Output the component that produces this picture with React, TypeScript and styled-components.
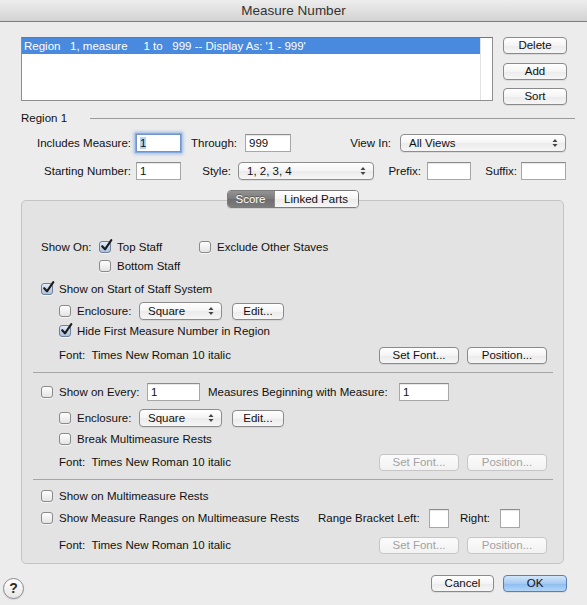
import styled, { createGlobalStyle, css } from 'styled-components';

const FONT = `'Lucida Grande', 'Liberation Sans', Arial, sans-serif`;

const GlobalStyle = createGlobalStyle`
  html, body {
    margin: 0;
    padding: 0;
  }
  body {
    background: #ececec;
    font-family: ${FONT};
  }
`;

const Window = styled.div`
  width: 587px;
  height: 605px;
  background: #ececec;
  display: flex;
  flex-direction: column;
  font-family: ${FONT};
  font-size: 11.5px;
  color: #111;
  overflow: hidden;
`;

const TitleBar = styled.div`
  height: 21px;
  flex-shrink: 0;
  border-bottom: 1px solid #7e7e7e;
  background: linear-gradient(#ededed, #d3d3d3);
  display: flex;
  align-items: center;
  justify-content: center;
  font-size: 13.5px;
  color: #333;
`;

/* ---------- top list ---------- */

const TopArea = styled.div`
  display: flex;
  margin-top: 15px;
  padding-left: 21px;
`;

const ListBox = styled.div`
  width: 472px;
  height: 64px;
  box-sizing: border-box;
  border: 1px solid #8e8e8e;
  border-top-color: #767676;
  background: #fff;
  display: flex;
`;

const ListRows = styled.div`
  flex: 1;
`;

const SelectedRow = styled.div`
  height: 16px;
  line-height: 16px;
  padding-left: 2px;
  background: #4a8ade;
  color: #fff;
  white-space: pre;
`;

const ScrollTrack = styled.div`
  width: 11px;
  border-left: 1px solid #e2e2e2;
`;

const SideButtons = styled.div`
  display: flex;
  flex-direction: column;
  gap: 8.5px;
  margin-left: 10px;
`;

const PushButton = styled.button<{ $w: number; $default?: boolean }>`
  box-sizing: border-box;
  width: ${p => p.$w}px;
  height: 17px;
  flex-shrink: 0;
  padding: 0;
  border: 1px solid #8a8a8a;
  border-radius: 4px;
  background: linear-gradient(#ffffff, #f4f4f4 50%, #ebebeb 51%, #f6f6f6);
  box-shadow: 0 1px 0 rgba(0, 0, 0, 0.07);
  font-family: ${FONT};
  font-size: 11.5px;
  color: #111;
  line-height: 15px;
  &:disabled {
    border-color: #c6c6c6;
    background: linear-gradient(#fbfbfb, #f2f2f2);
    color: #a2a2a2;
    box-shadow: none;
  }
  ${p =>
    p.$default &&
    css`
      border-color: #5a7fb4;
      background: linear-gradient(#d3e6fa, #a6cbf3 50%, #8cbcef 51%, #b3d6f9);
    `}
`;

/* ---------- region fields ---------- */

const RegionHeader = styled.div`
  display: flex;
  align-items: center;
  height: 14px;
  margin-top: 6px;
  padding: 0 12px 0 21px;
`;

const HeaderRule = styled.div`
  flex: 1;
  height: 1px;
  margin-left: 23px;
  background: #9a9a9a;
`;

const FieldRow = styled.div<{ $mt: number }>`
  display: flex;
  align-items: center;
  height: 18px;
  margin-top: ${p => p.$mt}px;
`;

const FieldLabel = styled.span<{ $w: number; $pr: number }>`
  box-sizing: border-box;
  flex-shrink: 0;
  width: ${p => p.$w}px;
  padding-right: ${p => p.$pr}px;
  text-align: right;
  white-space: nowrap;
`;

const TextField = styled.div<{ $w: number; $h?: number; $focused?: boolean; $ml?: number }>`
  box-sizing: border-box;
  flex-shrink: 0;
  width: ${p => p.$w}px;
  height: ${p => p.$h ?? 18}px;
  margin-left: ${p => p.$ml ?? 0}px;
  padding-left: 3px;
  border: 1px solid #a7a7a7;
  border-top-color: #8c8c8c;
  background: #fff;
  box-shadow: inset 0 1px 1px rgba(0, 0, 0, 0.1);
  display: flex;
  align-items: center;
  ${p =>
    p.$focused &&
    css`
      border-color: #6f95cb;
      box-shadow: 0 0 0 1px #86acdf, 0 0 3px 2px rgba(100, 150, 225, 0.6);
    `}
`;

const Selection = styled.span`
  background: #b3d3f8;
`;

const SelectBox = styled.div<{ $w: number; $ml?: number }>`
  box-sizing: border-box;
  flex-shrink: 0;
  width: ${p => p.$w}px;
  height: 18px;
  margin-left: ${p => p.$ml ?? 0}px;
  padding: 0 7px 0 8px;
  border: 1px solid #8d8d8d;
  border-radius: 4px;
  background: linear-gradient(#ffffff, #f4f4f4 50%, #ebebeb 51%, #f6f6f6);
  box-shadow: 0 1px 0 rgba(0, 0, 0, 0.07);
  display: flex;
  align-items: center;
`;

const SelectText = styled.span`
  flex: 1;
  white-space: nowrap;
`;

const Arrows = () => (
  <svg width="6" height="10" viewBox="0 0 6 10">
    <path d="M0.5 4 L3 1 L5.5 4 Z M0.5 6 L3 9 L5.5 6 Z" fill="#444" />
  </svg>
);

const Select = ({ w, ml, children }: React.PropsWithChildren<{ w: number; ml?: number }>) => (
  <SelectBox $w={w} $ml={ml}>
    <SelectText>{children}</SelectText>
    <Arrows />
  </SelectBox>
);

/* ---------- group box ---------- */

const GroupBox = styled.div`
  position: relative;
  box-sizing: border-box;
  width: 543px;
  height: 364px;
  margin: 20px 0 0 21px;
  padding-top: 37px;
  border: 1px solid #c4c4c4;
  border-radius: 5px;
  background: #e3e3e3;
`;

const Tabs = styled.div`
  position: absolute;
  top: -11px;
  left: 50%;
  transform: translateX(-50%);
  display: flex;
  height: 18px;
  box-sizing: border-box;
  border: 1px solid #7c7c7c;
  border-radius: 4px;
  overflow: hidden;
  box-shadow: 0 1px 0 rgba(0, 0, 0, 0.08);
`;

const Tab = styled.div<{ $w: number; $active?: boolean }>`
  width: ${p => p.$w}px;
  display: flex;
  align-items: center;
  justify-content: center;
  background: linear-gradient(#ffffff, #f4f4f4 50%, #ebebeb 51%, #f6f6f6);
  color: #111;
  & + & {
    border-left: 1px solid #8a8a8a;
  }
  ${p =>
    p.$active &&
    css`
      background: linear-gradient(#939393, #7a7a7a 50%, #6e6e6e 51%, #7c7c7c);
      color: #fff;
      text-shadow: 0 -1px 0 rgba(0, 0, 0, 0.35);
    `}
`;

const BoxRow = styled.div<{ $mt?: number; $indent: number }>`
  display: flex;
  align-items: center;
  height: 18px;
  margin-top: ${p => p.$mt ?? 0}px;
  padding-left: ${p => p.$indent}px;
  padding-right: 16px;
`;

const Separator = styled.div<{ $mt: number }>`
  height: 1px;
  margin: ${p => p.$mt}px 10px 0 11px;
  background: #a6a6a6;
`;

const Caption = styled.span<{ $w?: number; $ml?: number }>`
  flex-shrink: 0;
  white-space: pre;
  ${p => p.$w !== undefined && `width: ${p.$w}px;`}
  margin-left: ${p => p.$ml ?? 0}px;
`;

const FontText = styled.span`
  flex: 1;
  white-space: pre;
`;

const ButtonPair = styled.div`
  display: flex;
  gap: 8px;
`;

const CheckItem = styled.label<{ $w?: number }>`
  display: flex;
  align-items: center;
  gap: 6px;
  flex-shrink: 0;
  white-space: nowrap;
  ${p => p.$w !== undefined && `width: ${p.$w}px;`}
`;

const CheckBox = styled.span<{ $checked?: boolean }>`
  position: relative;
  box-sizing: border-box;
  width: 12px;
  height: 12px;
  flex-shrink: 0;
  border: 1px solid #8a8a8a;
  border-radius: 3px;
  background: linear-gradient(#fefefe, #e4e4e4);
  box-shadow: 0 1px 0 rgba(255, 255, 255, 0.6);
  ${p =>
    p.$checked &&
    css`
      border-color: #6c809c;
      background: linear-gradient(#e3ecf7, #abc1dc);
    `}
`;

const CheckMark = styled.svg`
  position: absolute;
  left: 0;
  top: -3px;
`;

const Check = ({
  checked,
  w,
  children,
}: React.PropsWithChildren<{ checked?: boolean; w?: number }>) => (
  <CheckItem $w={w}>
    <CheckBox $checked={checked}>
      {checked && (
        <CheckMark width="13" height="13" viewBox="0 0 13 13">
          <path
            d="M2.2 7.2 L5 10.3 L11.3 1.2"
            fill="none"
            stroke="#1c1c1c"
            strokeWidth="2.1"
            strokeLinecap="round"
            strokeLinejoin="round"
          />
        </CheckMark>
      )}
    </CheckBox>
    <span>{children}</span>
  </CheckItem>
);

const FontRow = ({ mt, disabled }: { mt: number; disabled?: boolean }) => (
  <BoxRow $mt={mt} $indent={37}>
    <FontText>{'Font:  Times New Roman 10 italic'}</FontText>
    <ButtonPair>
      <PushButton $w={80} disabled={disabled}>
        Set Font...
      </PushButton>
      <PushButton $w={80} disabled={disabled}>
        Position...
      </PushButton>
    </ButtonPair>
  </BoxRow>
);

const EnclosureRow = ({ mt }: { mt: number }) => (
  <BoxRow $mt={mt} $indent={37}>
    <Check w={80}>Enclosure:</Check>
    <Select w={83}>Square</Select>
    <Caption $ml={10}>
      <PushButton $w={52}>Edit...</PushButton>
    </Caption>
  </BoxRow>
);

/* ---------- footer ---------- */

const Footer = styled.div`
  display: flex;
  align-items: flex-start;
  gap: 9px;
  margin-top: 11px;
  padding: 0 20px 0 3px;
`;

const HelpButton = styled.button`
  box-sizing: border-box;
  width: 21px;
  height: 21px;
  margin-top: 3px;
  padding: 0;
  border: 1px solid #8a8a8a;
  border-radius: 50%;
  background: linear-gradient(#ffffff, #e6e6e6);
  box-shadow: 0 1px 1px rgba(0, 0, 0, 0.12);
  font-family: ${FONT};
  font-size: 14px;
  font-weight: bold;
  color: #2a2a2a;
  line-height: 19px;
`;

const Spacer = styled.div`
  flex: 1;
`;

export default function App() {
  return (
    <>
      <GlobalStyle />
      <Window>
        <TitleBar>Measure Number</TitleBar>

        <TopArea>
          <ListBox>
            <ListRows>
              <SelectedRow>{"Region   1, measure     1 to   999 -- Display As: '1 - 999'"}</SelectedRow>
            </ListRows>
            <ScrollTrack />
          </ListBox>
          <SideButtons>
            <PushButton $w={64}>Delete</PushButton>
            <PushButton $w={64}>Add</PushButton>
            <PushButton $w={64}>Sort</PushButton>
          </SideButtons>
        </TopArea>

        <RegionHeader>
          <span>Region 1</span>
          <HeaderRule />
        </RegionHeader>

        <FieldRow $mt={9}>
          <FieldLabel $w={136} $pr={5}>Includes Measure:</FieldLabel>
          <TextField $w={45} $focused>
            <Selection>1</Selection>
          </TextField>
          <FieldLabel $w={64} $pr={8}>Through:</FieldLabel>
          <TextField $w={46}>999</TextField>
          <FieldLabel $w={109} $pr={9}>View In:</FieldLabel>
          <Select w={166}>All Views</Select>
        </FieldRow>

        <FieldRow $mt={10}>
          <FieldLabel $w={136} $pr={5}>Starting Number:</FieldLabel>
          <TextField $w={45}>1</TextField>
          <FieldLabel $w={57} $pr={7}>Style:</FieldLabel>
          <Select w={136}>1, 2, 3, 4</Select>
          <FieldLabel $w={53} $pr={6}>Prefix:</FieldLabel>
          <TextField $w={44} />
          <FieldLabel $w={50} $pr={4}>Suffix:</FieldLabel>
          <TextField $w={45} />
        </FieldRow>

        <GroupBox>
          <Tabs>
            <Tab $w={46} $active>
              Score
            </Tab>
            <Tab $w={83}>Linked Parts</Tab>
          </Tabs>

          <BoxRow $indent={19}>
            <Caption $w={58}>Show On:</Caption>
            <Check checked w={100}>
              Top Staff
            </Check>
            <Check>Exclude Other Staves</Check>
          </BoxRow>
          <BoxRow $mt={1} $indent={77}>
            <Check>Bottom Staff</Check>
          </BoxRow>
          <BoxRow $mt={5} $indent={19}>
            <Check checked>Show on Start of Staff System</Check>
          </BoxRow>
          <EnclosureRow mt={4} />
          <BoxRow $mt={2} $indent={37}>
            <Check checked>Hide First Measure Number in Region</Check>
          </BoxRow>
          <FontRow mt={6} />

          <Separator $mt={8} />

          <BoxRow $mt={10} $indent={19}>
            <Check w={106}>Show on Every:</Check>
            <TextField $w={53}>1</TextField>
            <Caption $w={191} $ml={8}>
              Measures Beginning with Measure:
            </Caption>
            <TextField $w={50}>1</TextField>
          </BoxRow>
          <EnclosureRow mt={8} />
          <BoxRow $mt={3} $indent={37}>
            <Check>Break Multimeasure Rests</Check>
          </BoxRow>
          <FontRow mt={5} disabled />

          <Separator $mt={8} />

          <BoxRow $mt={7} $indent={19}>
            <Check>Show on Multimeasure Rests</Check>
          </BoxRow>
          <BoxRow $mt={4} $indent={19}>
            <Check w={277}>Show Measure Ranges on Multimeasure Rests</Check>
            <Caption $w={111}>Range Bracket Left:</Caption>
            <TextField $w={20} $h={19} />
            <Caption $w={40} $ml={11}>
              Right:
            </Caption>
            <TextField $w={20} $h={19} />
          </BoxRow>
          <FontRow mt={9} disabled />
        </GroupBox>

        <Footer>
          <HelpButton>?</HelpButton>
          <Spacer />
          <PushButton $w={63}>Cancel</PushButton>
          <PushButton $w={64} $default>
            OK
          </PushButton>
        </Footer>
      </Window>
    </>
  );
}
